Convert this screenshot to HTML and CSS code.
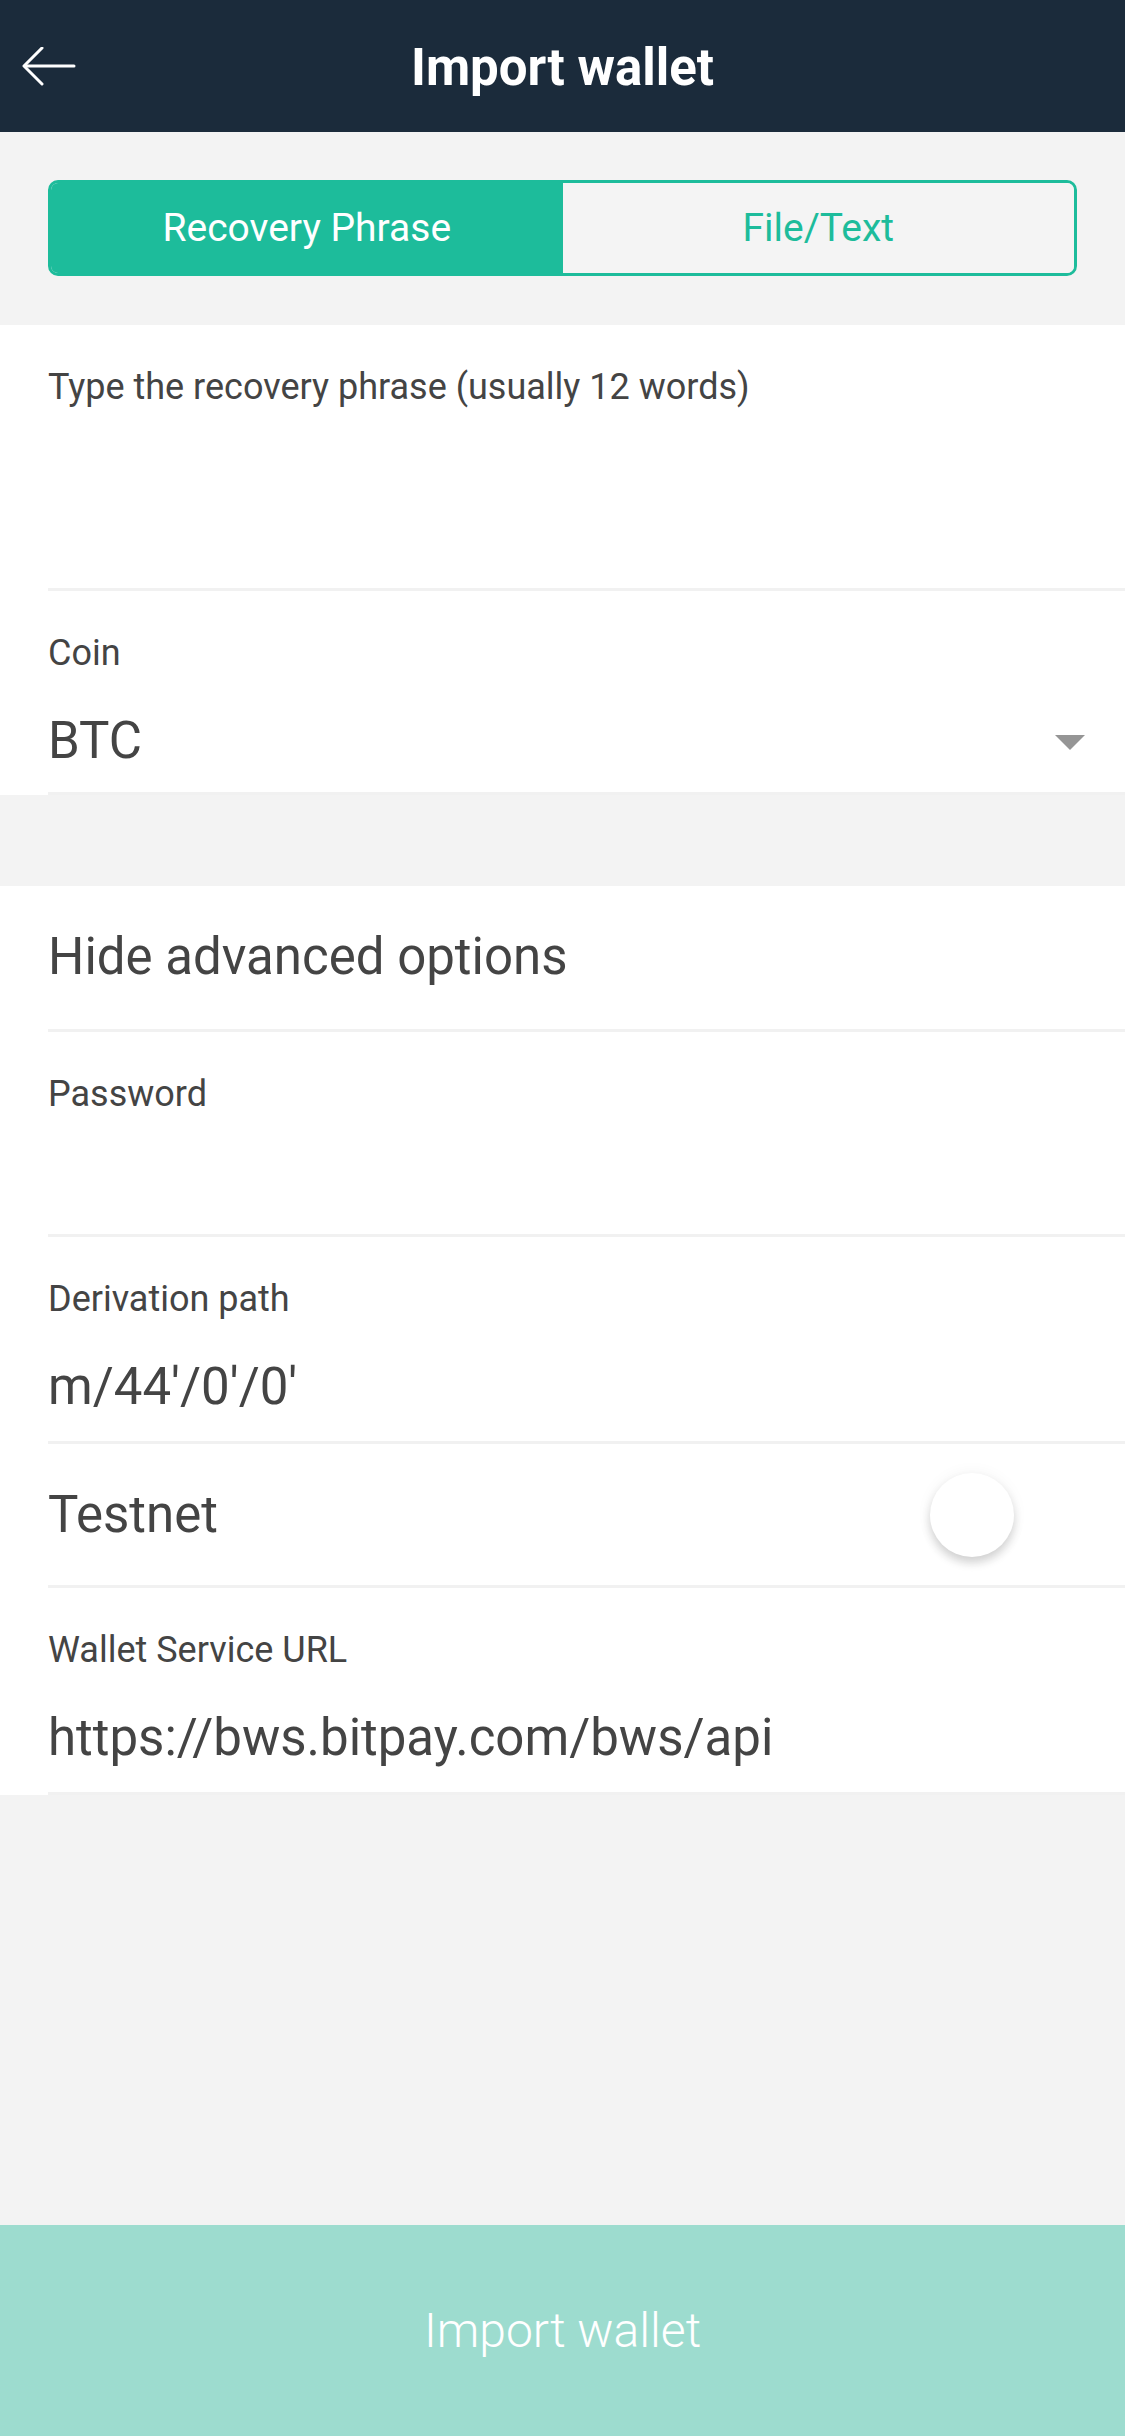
FILE: index.html
```html
<!DOCTYPE html>
<html lang="en">
<head>
<meta charset="utf-8">
<title>Import wallet</title>
<link rel="stylesheet" href="styles.css">
</head>
<body>
<div class="screen">
  <header class="topbar">
    <div class="back">
      <svg width="54" height="42" viewBox="0 0 54 42" aria-hidden="true">
        <path d="M3 19 H52" stroke="#fff" stroke-width="3" stroke-linecap="round" fill="none"/>
        <path d="M20 1 L2 19 L20 37" stroke="#fff" stroke-width="3" stroke-linecap="round" stroke-linejoin="round" fill="none"/>
      </svg>
    </div>
    <h1 class="title">Import wallet</h1>
    <div class="spacer"></div>
  </header>

  <div class="tabs-wrap">
    <div class="tabs">
      <div class="tab active">Recovery Phrase</div>
      <div class="tab">File/Text</div>
    </div>
  </div>

  <section class="card">
    <div class="row row-phrase">
      <div class="label">Type the recovery phrase (usually 12 words)</div>
    </div>
    <div class="row row-tight">
      <div class="label">Coin</div>
      <div class="value select">
        <span>BTC</span>
        <span class="caret"></span>
      </div>
    </div>
  </section>

  <div class="gap"></div>

  <section class="card">
    <div class="row row-plain">
      <div class="value">Hide advanced options</div>
    </div>
    <div class="row">
      <div class="label">Password</div>
      <div class="value"></div>
    </div>
    <div class="row row-loose">
      <div class="label">Derivation path</div>
      <div class="value">m/44'/0'/0'</div>
    </div>
    <div class="row row-toggle">
      <div class="value">Testnet</div>
      <div class="toggle"><span class="knob"></span></div>
    </div>
    <div class="row row-loose">
      <div class="label">Wallet Service URL</div>
      <div class="value">https://bws.bitpay.com/bws/api</div>
    </div>
  </section>

  <div class="filler"></div>

  <button class="import-btn" type="button">Import wallet</button>
</div>
</body>
</html>
```

FILE: styles.css
```css
* { box-sizing: border-box; }

html, body {
  margin: 0;
  padding: 0;
  background: #f3f3f3;
}

body {
  font-family: Roboto, "Noto Sans", "Liberation Sans", sans-serif;
  color: #444;
}

.screen {
  width: 1125px;
  height: 2436px;
  display: flex;
  flex-direction: column;
  background: #f3f3f3;
}

.topbar {
  height: 132px;
  flex: none;
  background: #1b2b3b;
  display: grid;
  grid-template-columns: 1fr auto 1fr;
  align-items: center;
}

.back {
  padding-left: 22px;
  padding-top: 4px;
  display: flex;
  align-items: center;
}

.title {
  margin: 0;
  font-size: 51px;
  font-weight: 700;
  color: #fff;
  line-height: 60px;
  padding-top: 4px;
}

.tabs-wrap {
  flex: none;
  padding: 48px 48px 49px;
}

.tabs {
  display: flex;
  height: 96px;
  border: 3px solid #1dbc9b;
  border-radius: 10px;
  overflow: hidden;
}

.tab {
  flex: 1;
  display: flex;
  align-items: center;
  justify-content: center;
  font-size: 39px;
  color: #1dbc9b;
  background: #f4f4f4;
}

.tab.active {
  background: #1dbc9b;
  color: #fff;
}

.card {
  flex: none;
  background: #fff;
}

.row {
  margin-left: 48px;
  padding: 40px 0 22px;
  border-bottom: 3px solid #f1f1f1;
}

.row-tight {
  padding-bottom: 21px;
}

.row-loose {
  padding-bottom: 24px;
}

.label {
  font-size: 36px;
  line-height: 44px;
  height: 44px;
  white-space: nowrap;
}

.label + .value {
  margin-top: 36px;
}

.value {
  font-size: 51px;
  line-height: 60px;
  height: 60px;
  white-space: nowrap;
}

.row-phrase {
  height: 266px;
}

.select {
  display: flex;
  align-items: center;
  justify-content: space-between;
  padding-right: 40px;
}

.caret {
  width: 0;
  height: 0;
  border-left: 15px solid transparent;
  border-right: 15px solid transparent;
  border-top: 15px solid #959595;
  margin-top: 2px;
}

.row-plain {
  padding: 41px 0 42px;
}

.row-toggle {
  height: 144px;
  padding: 0;
  display: flex;
  align-items: center;
  justify-content: space-between;
}

.toggle {
  width: 132px;
  height: 84px;
  margin-right: 63px;
  display: flex;
  align-items: center;
}

.knob {
  width: 84px;
  height: 84px;
  border-radius: 50%;
  background: #fff;
  box-shadow: 0 6px 10px rgba(0, 0, 0, 0.16), 0 0 16px rgba(0, 0, 0, 0.05);
}

.gap {
  height: 91px;
  flex: none;
}

.filler {
  flex: 1;
}

.import-btn {
  flex: none;
  height: 211px;
  width: 100%;
  border: 0;
  margin: 0;
  background: #9ddccf;
  color: #fff;
  font-family: Roboto, "Noto Sans", "Liberation Sans", sans-serif;
  font-size: 48px;
  font-weight: 300;
  padding: 0;
}
```
